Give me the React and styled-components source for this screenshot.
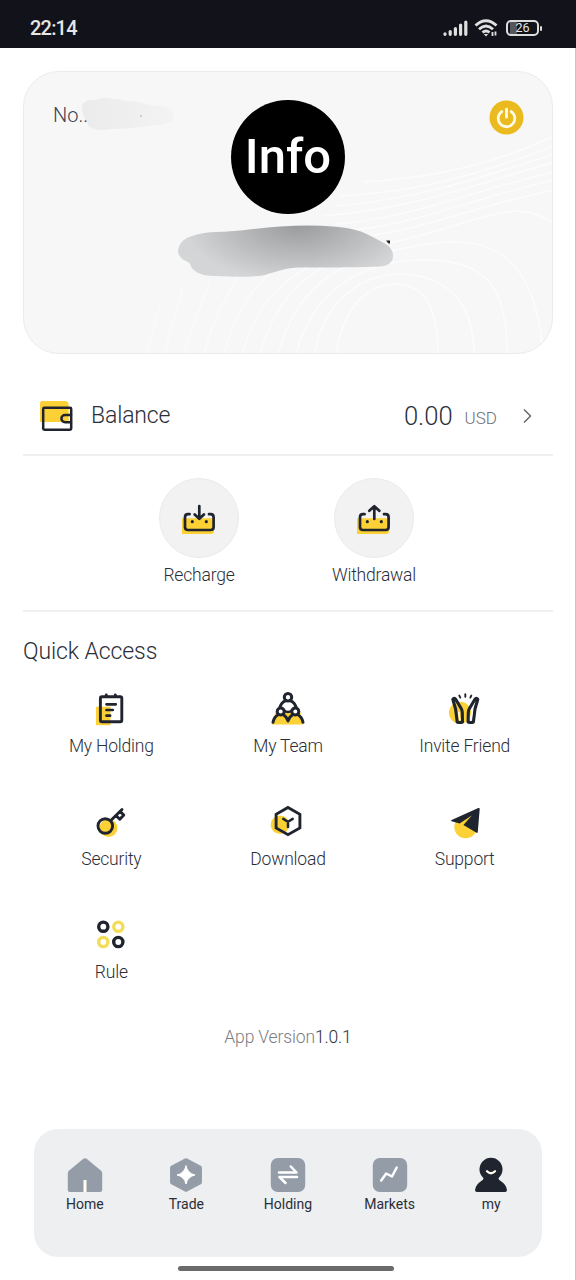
import React from 'react';
import styled, { createGlobalStyle } from 'styled-components';

const DARK = '#20242f';
const YELLOW = '#fbd136';
const GREY = '#949ca8';

const GlobalStyle = createGlobalStyle`
  * {
    box-sizing: border-box;
  }
  body {
    margin: 0;
    background: #fff;
    font-family: Roboto, 'Liberation Sans', sans-serif;
    font-weight: 300;
    color: #2b2e38;
  }
  svg {
    display: block;
    flex: none;
  }
`;

const Screen = styled.div`
  width: 576px;
  height: 1280px;
  display: flex;
  flex-direction: column;
  overflow: hidden;
`;

const StatusBar = styled.header`
  height: 48px;
  padding: 7px 34px 0 30px;
  display: flex;
  align-items: center;
  justify-content: space-between;
  background: #12131a;
  color: #e6e6e6;
`;

const Clock = styled.span`
  font-size: 20px;
  font-weight: 500;
  letter-spacing: -0.8px;
`;

const StatusIcons = styled.div`
  display: flex;
  align-items: center;
  gap: 6px;
`;

const Battery = styled.div`
  position: relative;
  width: 33px;
  height: 16px;
  margin: 0 3px 0 1px;
  border: 2px solid #dcdcdc;
  border-radius: 5px;
  background: linear-gradient(90deg, transparent 2px, #56575c 2px, #56575c 9px, transparent 9px);
  font-size: 12.5px;
  font-weight: 400;
  line-height: 12px;
  text-align: center;
  &::after {
    content: '';
    position: absolute;
    right: -5px;
    top: 4px;
    width: 2px;
    height: 5px;
    border-radius: 1px;
    background: #dcdcdc;
  }
`;

const Page = styled.main`
  flex: 1;
  display: flex;
  flex-direction: column;
  padding: 23px 22px 0 23px;
  border-right: 1px solid #c4c4c4;
`;

const ProfileCard = styled.section`
  position: relative;
  height: 283px;
  padding: 28px 28px 0 29px;
  border: 1px solid #ebebeb;
  border-radius: 36px;
  background: #f7f7f7;
  overflow: hidden;
`;

const CardLines = styled.svg`
  position: absolute;
  left: 0;
  top: 0;
`;

const CardTop = styled.div`
  position: relative;
  display: grid;
  grid-template-columns: 178px auto 1fr;
  align-items: start;
`;

const UserNo = styled.div`
  display: flex;
  font-size: 20px;
  line-height: 30px;
  color: #3c4250;
  span {
    z-index: 1;
  }
`;

const NoSmudge = styled.svg`
  margin: -2px 0 0 -7px;
`;

const Avatar = styled.div`
  width: 114px;
  height: 114px;
  border-radius: 50%;
  background: #000;
  color: #fff;
  font-size: 49px;
  font-weight: 500;
  line-height: 114px;
  text-align: center;
`;

const PowerButton = styled.button`
  justify-self: end;
  padding: 0;
  border: 0;
  background: none;
`;

const NameSmudge = styled.svg`
  position: relative;
  margin: 10px auto 0 123px;
`;

const BalanceRow = styled.section`
  height: 102px;
  padding: 23px 18px 0 16px;
  display: flex;
  align-items: center;
  border-bottom: 2px solid #f0f0f0;
`;

const BalanceLabel = styled.span`
  flex: 1;
  margin-left: 16px;
  font-size: 23px;
  letter-spacing: -0.15px;
`;

const Amount = styled.span`
  font-size: 25.6px;
`;

const Currency = styled.span`
  margin: 5px 24px 0 12px;
  font-size: 17px;
  color: #6d7078;
`;

const Actions = styled.section`
  height: 156px;
  padding: 22px 3px 0 0;
  display: flex;
  justify-content: center;
  gap: 55px;
  border-bottom: 2px solid #f0f0f0;
`;

const Action = styled.div`
  width: 120px;
  display: flex;
  flex-direction: column;
  align-items: center;
`;

const ActionCircle = styled.div`
  width: 80px;
  height: 80px;
  padding-top: 2px;
  display: flex;
  align-items: center;
  justify-content: center;
  border: 1px solid #ebebeb;
  border-radius: 50%;
  background: #f2f2f2;
`;

const Label = styled.span`
  margin-top: ${({ $gap }) => $gap}px;
  font-size: 17.5px;
  letter-spacing: -0.2px;
  line-height: 22px;
  white-space: nowrap;
`;

const Title = styled.h2`
  margin: 25px 0 0;
  font-size: 23px;
  font-weight: 300;
  letter-spacing: -0.1px;
  line-height: 30px;
`;

const Grid = styled.section`
  margin-top: 24px;
  display: grid;
  grid-template-columns: repeat(3, 1fr);
  grid-auto-rows: 113px;
`;

const GridItem = styled.div`
  display: flex;
  flex-direction: column;
  align-items: center;
`;

const Version = styled.p`
  margin: -4px 0 0;
  font-size: 17.5px;
  letter-spacing: -0.15px;
  line-height: 22px;
  text-align: center;
  color: #7b7d83;
  b {
    font-weight: 300;
    color: #2b2e38;
  }
`;

const TabBar = styled.nav`
  margin: auto 11px 0;
  height: 128px;
  padding-top: 28px;
  display: flex;
  border-radius: 24px;
  background: #edeff1;
`;

const Tab = styled.div`
  flex: 1;
  display: flex;
  flex-direction: column;
  align-items: center;
  gap: 2px;
  font-size: 14px;
  font-weight: 400;
  line-height: 18px;
`;

const HomeIndicator = styled.div`
  width: 216px;
  height: 5px;
  margin: 9px auto 9px 155px;
  border-radius: 3px;
  background: #6a6a6a;
`;

// Shared 36px box, every icon below is drawn on it
const Icon = ({ children, ...rest }) => (
  <svg
    width="36"
    height="36"
    viewBox="0 0 36 36"
    fill="none"
    stroke={DARK}
    strokeWidth="2.9"
    strokeLinecap="round"
    strokeLinejoin="round"
    {...rest}
  >
    {children}
  </svg>
);

const Shade = ({ cx, cy, r }) => <circle cx={cx} cy={cy} r={r} fill={YELLOW} stroke="none" />;

const WalletIcon = () => (
  <Icon strokeWidth="2.5">
    <path d="M1 5q0-2 2-2h23q3.5 0 3.7 4v17H1z" fill={YELLOW} stroke="none" />
    <rect x="4.2" y="9.8" width="28" height="22" rx="1.2" />
    <path d="M32 17h-6a3.6 3.6 0 0 0 0 7.2h6" />
  </Icon>
);

const Tray = ({ children }) => (
  <Icon strokeWidth="2.7">
    <path d="M1 17.3h32V30q0 3-3 3H1z" fill={YELLOW} stroke="none" />
    <path d="M8.6 13.2H7q-3 0-3 3V26q0 3 3 3h22.6q3 0 3-3v-9.8q0-3-3-3H28" />
    <path d="M11.3 20.7h.01M25.3 20.7h.01" strokeWidth="3.2" />
    {children}
  </Icon>
);

const RechargeIcon = () => (
  <Tray>
    <path d="M18.3 5v12.6M13.7 13.4l4.6 4.4 4.6-4.4" />
  </Tray>
);

const WithdrawalIcon = () => (
  <Tray>
    <path d="M18.3 18V5.6M13.3 9.8l5-4.6 5 4.6" />
  </Tray>
);

const HoldingListIcon = () => (
  <Icon>
    <path d="M3 15.7h14.5v18.5H3z" fill={YELLOW} stroke="none" />
    <rect x="7.4" y="5.8" width="21.4" height="25" rx="1.5" />
    <path d="M13.3 4v1.6M22.3 4v1.6" />
    <path d="M13.5 13.3h9.3M13.5 19h6.3M13.5 24.7h3.6" strokeWidth="2.7" />
  </Icon>
);

const TeamIcon = () => (
  <Icon strokeWidth="3">
    <path d="M6 20h24l3 13.5H1.5z" fill={YELLOW} stroke="none" />
    <path d="M10.2 16.5c.8-3.4 3.5-6.6 7.8-6.6s7 3.2 7.8 6.6L18 21z" fill="#fff" stroke="none" />
    <circle cx="18" cy="6.2" r="3.7" fill="#fff" />
    <path d="M9.8 16.5c1-3.3 3.2-5.8 5.7-6.6M26.2 16.5c-1-3.3-3.2-5.8-5.7-6.6" />
    <circle cx="10.7" cy="20.5" r="3.5" fill="#fff" />
    <circle cx="25.3" cy="20.5" r="3.5" fill="#fff" />
    <path d="M14 19.5q4 3 8 0" strokeWidth="2.2" />
    <path d="M3 31.3q1-5.3 4.8-7.3M13.6 24q3.4 2 4.4 6 1-4 4.4-6M28.2 24q3.8 2 4.8 7.3" />
  </Icon>
);

const InviteIcon = () => (
  <Icon strokeWidth="3.1">
    <Shade cx={13} cy={21.7} r={11} />
    <path d="M5.8 8.3q1.4-2 3 .2l5.5 9.3q1 1.6 1 4l.2 9.2q-2.8 1-5.3 0L8.6 18z" />
    <path d="M30.8 8.3q-1.4-2-3 .2l-5.5 9.3q-1 1.6-1 4l-.2 9.2q2.8 1 5.3 0L28 18z" />
    <path d="M11.8 21.5l1 7.5M24.8 21.5l-1 7.5" stroke="#fff" strokeWidth="1.5" />
    <path d="M18.3 3.2v2.6M12.3 4.6l1 2M24.3 4.6l-1 2" strokeWidth="1.9" />
  </Icon>
);

const KeyIcon = () => (
  <Icon>
    <Shade cx={15.5} cy={24} r={9} />
    <circle cx="12.3" cy="22" r="7.3" />
    <path d="M17.8 16.5L29 5.5M23 11.5l3.8 3.8 4-4.2-3.6-3.6" />
  </Icon>
);

const BoxIcon = () => (
  <Icon strokeLinejoin="miter">
    <Shade cx={10} cy={20.7} r={9.3} />
    <path d="M18 3.5l11.9 6.8v13.6L18 30.7 6.1 23.9V10.3z" />
    <path d="M18 23v-5.3M13.3 14.9l4.7 2.8 4.7-2.8" strokeWidth="2.5" />
  </Icon>
);

const PlaneIcon = () => (
  <Icon stroke="none">
    <Shade cx={18.6} cy={23} r={11.3} />
    <path
      d="M31.3 4q1.5-.4 1.4 1l-1.9 22.7q-.2 1.8-1.7.9L16.4 21l8.4-9.6-12.2 8-8-2.2q-1.2-.6 0-1.2z"
      fill={DARK}
    />
  </Icon>
);

const RuleIcon = () => (
  <Icon strokeWidth="3.4">
    <circle cx="10.3" cy="9.7" r="4.6" />
    <circle cx="25.3" cy="9.7" r="4.6" stroke="#f3dd57" />
    <circle cx="10.3" cy="25" r="4.6" stroke="#f3dd57" />
    <circle cx="25.3" cy="25" r="4.6" />
  </Icon>
);

const HomeIcon = () => (
  <Icon stroke="none">
    <path d="M15.8 2.2q2.2-1.7 4.4 0l13.6 11.4q1.4 1.2 1.4 3V33q0 2-2 2H2.8q-2 0-2-2V16.6q0-1.8 1.4-3z" fill={GREY} />
    <path d="M16.5 23h3v12h-3z" fill="#fffef0" />
  </Icon>
);

const TradeIcon = () => (
  <Icon stroke="none">
    <path d="M18 3.5l13.7 7.3v14.4L18 32.5 4.3 25.2V10.8z" fill={GREY} stroke={GREY} strokeWidth="4.5" />
    <path d="M18 9q1.6 7.4 9 9-7.4 1.6-9 9-1.6-7.4-9-9 7.4-1.6 9-9z" fill="#fff" stroke="#fff" strokeWidth="1" />
  </Icon>
);

const SwapIcon = () => (
  <Icon stroke="#fff" strokeWidth="2.5">
    <rect x="0.8" y="1" width="34.4" height="34" rx="7" fill={GREY} stroke="none" />
    <path d="M9 15.5h17.5l-5.7-6M27 20H9.5l6 6" />
  </Icon>
);

const ChartIcon = () => (
  <Icon stroke="#fff" strokeWidth="2.5">
    <rect x="0.8" y="1" width="34.4" height="34" rx="7" fill={GREY} stroke="none" />
    <path d="M9.2 23.5l5-7 5.8 3 4.7-9" />
  </Icon>
);

const UserIcon = () => (
  <Icon stroke="none">
    <circle cx="18" cy="12.3" r="11.5" fill={DARK} />
    <path d="M11 20.5h14q.4 2.2 3.4 4 4.8 3 5.6 8.5 0 2-2 2H4q-2 0-2-2 .8-5.5 5.6-8.5 3-1.8 3.4-4z" fill={DARK} />
    <path d="M14 14.3q4 4 8 0" stroke="#fffef0" strokeWidth="2.3" />
  </Icon>
);

const actions = [
  { name: 'Recharge', icon: RechargeIcon },
  { name: 'Withdrawal', icon: WithdrawalIcon },
];

const quickAccess = [
  { name: 'My Holding', icon: HoldingListIcon },
  { name: 'My Team', icon: TeamIcon },
  { name: 'Invite Friend', icon: InviteIcon },
  { name: 'Security', icon: KeyIcon },
  { name: 'Download', icon: BoxIcon },
  { name: 'Support', icon: PlaneIcon },
  { name: 'Rule', icon: RuleIcon },
];

const tabs = [
  { name: 'Home', icon: HomeIcon },
  { name: 'Trade', icon: TradeIcon },
  { name: 'Holding', icon: SwapIcon },
  { name: 'Markets', icon: ChartIcon },
  { name: 'my', icon: UserIcon },
];

// Contour lines in the lower right of the card
const contours = [
  'M312 283C318 240 340 212 372 212s42 30 42 71',
  'M290 283C300 232 332 204 374 202c44 0 76 24 76 81',
  'M272 283C286 226 330 188 400 188c56 0 84 20 83 95',
  'M254 283C270 220 310 190 370 178c60-12 140-30 149 105',
  'M236 283C250 226 290 186 360 172c60-12 90-28 130-33 16 0 26 4 40 12',
  'M218 283c14-50 40-78 80-94',
  'M200 283c10-40 26-64 46-82',
  'M180 283c8-34 20-54 34-78',
  'M160 283c8-30 16-46 26-74',
  'M140 283c6-24 12-40 18-66',
  'M122 283c6-20 10-36 14-50',
  'M340 164c60-6 110-30 190-46',
  'M330 158c70-8 120-32 200-50',
  'M310 152c80-6 140-34 220-52',
  'M300 144c80-6 150-30 230-54',
  'M310 134c80-6 140-26 220-52',
  'M316 124c80-4 140-22 214-50',
  'M340 110c70-4 130-18 190-46',
];

const App = () => (
  <>
    <GlobalStyle />
    <Screen>
      <StatusBar>
        <Clock>22:14</Clock>
        <StatusIcons>
          {/* Signal */}
          <svg width="25" height="18" viewBox="0 0 25 18" stroke="#e0e0e0" strokeWidth="3.2" strokeLinecap="round">
            <path d="M2 14.8v.5M7.2 12.5v2.8M12.4 9.5v5.8M17.6 6v9.3M22.8 3v12.3" />
          </svg>
          {/* Wifi */}
          <svg width="25" height="18" viewBox="0 0 25 18" fill="none" stroke="#e0e0e0" strokeWidth="2.9">
            <path d="M1.5 6.5q10.5-9.5 21 0M5 10.3q7-6.5 14 0M8.5 13.5q3.5-3 7 0" />
            <path d="M9.8 15l2.2 2.5 2.2-2.5z" fill="#e0e0e0" stroke="none" />
            <path d="M18.5 13v4M21.5 12.5v4" strokeWidth="1.8" />
          </svg>
          <Battery>26</Battery>
        </StatusIcons>
      </StatusBar>

      <Page>
        <ProfileCard>
          <CardLines width="528" height="281" viewBox="0 0 528 281" fill="none" strokeWidth="1.5">
            <defs>
              <linearGradient id="lineFade" gradientUnits="userSpaceOnUse" x1="100" y1="0" x2="528" y2="0">
                <stop offset="0" stopColor="#f9f9f9" />
                <stop offset="0.5" stopColor="#fcfcfc" />
              </linearGradient>
            </defs>
            {contours.map((d) => (
              <path key={d} d={d} stroke="url(#lineFade)" />
            ))}
          </CardLines>
          <CardTop>
            <UserNo>
              <span>No..</span>
              <NoSmudge width="94" height="34" viewBox="0 0 94 34">
                <defs>
                  <linearGradient id="noFade">
                    <stop offset="0" stopColor="#ebebec" />
                    <stop offset="1" stopColor="#f3f3f3" />
                  </linearGradient>
                </defs>
                <path
                  d="M1 8q2-6 9-6 4 1 7-1 8-2 15 0 8 0 14 2 10 0 18 3 8 2 16 2 13 2 13 10 0 7-14 9-9 0-18 2-14 2-30 2-12 2-18 0-6-2-7-7-5-6-5-16z"
                  fill="url(#noFade)"
                />
                <circle cx="60" cy="18" r="0.7" fill="#999" />
              </NoSmudge>
            </UserNo>
            <Avatar>Info</Avatar>
            <PowerButton aria-label="Log out">
              <svg width="35" height="35" viewBox="0 0 35 35" fill="none" stroke="#fffbe8" strokeWidth="2.8" strokeLinecap="round">
                <circle cx="17.5" cy="17.5" r="17" fill="#ebba1e" stroke="none" />
                <path d="M12.8 11.6a8.3 8.3 0 1 0 9.4 0M17.5 9.2v8" />
              </svg>
            </PowerButton>
          </CardTop>
          <NameSmudge width="220" height="56" viewBox="0 0 220 56">
            <defs>
              <radialGradient
                id="nameFade"
                gradientUnits="userSpaceOnUse"
                cx="0"
                cy="0"
                r="1"
                gradientTransform="translate(122 0) scale(115 58)"
              >
                <stop offset="0" stopColor="#999a9c" />
                <stop offset="0.45" stopColor="#b3b5b7" />
                <stop offset="1" stopColor="#d3d5d7" />
              </radialGradient>
            </defs>
            <path
              d="M2 28C2 20 8 14 16 12q12-4 25-4C56 8 84 4 104 2.5q30-2 53 0 16 1 28 5c8 3 14 7 20 10 9 4 12 9 12 14q0 10-13 11c-20 1-60 1-80 1-14 0-22 4-37 8-16 2-40 1-56 0-8-1-14-5-16-9-1-5-5-5-8-7q-5-4-5-8.5z"
              fill="url(#nameFade)"
            />
            <path d="M210 16.5h4v3h-1.5z" fill="#222" />
          </NameSmudge>
        </ProfileCard>

        <BalanceRow>
          <WalletIcon />
          <BalanceLabel>Balance</BalanceLabel>
          <Amount>0.00</Amount>
          <Currency>USD</Currency>
          <svg width="14" height="16" viewBox="0 0 14 16" fill="none" stroke="#5f626a" strokeWidth="1.4">
            <path d="M3 1.5L9.5 8 3 14.5" />
          </svg>
        </BalanceRow>

        <Actions>
          {actions.map(({ name, icon: ActionIcon }) => (
            <Action key={name}>
              <ActionCircle>
                <ActionIcon />
              </ActionCircle>
              <Label $gap={6}>{name}</Label>
            </Action>
          ))}
        </Actions>

        <Title>Quick Access</Title>
        <Grid>
          {quickAccess.map(({ name, icon: ItemIcon }) => (
            <GridItem key={name}>
              <ItemIcon />
              <Label $gap={8}>{name}</Label>
            </GridItem>
          ))}
        </Grid>

        <Version>
          App Version<b>1.0.1</b>
        </Version>

        <TabBar>
          {tabs.map(({ name, icon: TabIcon }) => (
            <Tab key={name}>
              <TabIcon />
              {name}
            </Tab>
          ))}
        </TabBar>
        <HomeIndicator />
      </Page>
    </Screen>
  </>
);

export default App;
